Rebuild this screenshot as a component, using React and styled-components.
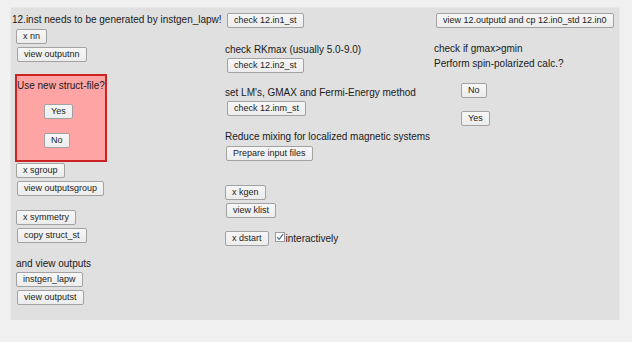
import React, { useState } from "react";
import styled, { createGlobalStyle } from "styled-components";

const Global = createGlobalStyle`
  html, body {
    margin: 0;
    background: #f0f0f0;
  }
  body {
    font-family: "Liberation Sans", Arial, sans-serif;
    color: #1a1a1a;
  }
`;

const App = () => {
  const [interactive, setInteractive] = useState(true);

  return (
    <>
      <Global />
      <Panel>
        <Column>
          <Text $mt={5} $ml={1}>
            12.inst needs to be generated by instgen_lapw!
          </Text>
          <Btn $mt={2} $ml={5}>x nn</Btn>
          <Btn $mt={3} $ml={6}>view outputnn</Btn>
          <Alert>
            <Text $mt={0} $ml={0}>Use new struct-file?</Text>
            <Btn $mt={11} $ml={27}>Yes</Btn>
            <Btn $mt={14} $ml={27}>No</Btn>
          </Alert>
          <Btn $mt={1} $ml={5}>x sgroup</Btn>
          <Btn $mt={3} $ml={6}>view outputsgroup</Btn>
          <Btn $mt={14} $ml={5}>x symmetry</Btn>
          <Btn $mt={3} $ml={6}>copy struct_st</Btn>
          <Text $mt={14} $ml={5}>and view outputs</Text>
          <Btn $mt={1} $ml={5}>instgen_lapw</Btn>
          <Btn $mt={3} $ml={6}>view outputst</Btn>
        </Column>

        <Column>
          <Btn $mt={5} $ml={2}>check 12.in1_st</Btn>
          <Text $mt={15}>check RKmax (usually 5.0-9.0)</Text>
          <Btn $mt={1} $ml={2}>check 12.in2_st</Btn>
          <Text $mt={13}>set LM's, GMAX and Fermi-Energy method</Text>
          <Btn $mt={1} $ml={2}>check 12.inm_st</Btn>
          <Text $mt={14}>Reduce mixing for localized magnetic systems</Text>
          <Btn $mt={2} $ml={1}>Prepare input files</Btn>
          <Btn $mt={24} $ml={0}>x kgen</Btn>
          <Btn $mt={3} $ml={1}>view klist</Btn>
          <Row $mt={13}>
            <Btn $mt={0} $ml={0}>x dstart</Btn>
            <Check onClick={() => setInteractive((v) => !v)}>
              <Box>
                {interactive && (
                  <svg width="8" height="8" viewBox="0 0 8 8">
                    <path
                      d="M1 4.2 L3.2 6.4 L7 1.2"
                      fill="none"
                      stroke="#4a6a9a"
                      strokeWidth="1.2"
                    />
                  </svg>
                )}
              </Box>
              interactively
            </Check>
          </Row>
        </Column>

        <Column>
          <Btn $mt={5} $ml={2}>view 12.outputd and cp 12.in0_std 12.in0</Btn>
          <Text $mt={14}>check if gmax&gt;gmin</Text>
          <Text $mt={1}>Perform spin-polarized calc.?</Text>
          <Btn $mt={12} $ml={27}>No</Btn>
          <Btn $mt={13} $ml={27}>Yes</Btn>
        </Column>
      </Panel>
    </>
  );
};

export default App;

// style
const Panel = styled.div`
  margin: 8px 13px 0 11px;
  height: 312px;
  background: #e0e0e0;
  display: grid;
  grid-template-columns: 214px 209px 1fr;
  box-shadow: 0 0 0 1px #e9e9e9;
`;

const Column = styled.div`
  display: flex;
  flex-direction: column;
  align-items: flex-start;
`;

const Text = styled.div`
  margin-top: ${(p) => p.$mt}px;
  margin-left: ${(p) => p.$ml || 0}px;
  font-size: 10px;
  line-height: 14px;
  white-space: nowrap;
`;

const Btn = styled.button`
  margin-top: ${(p) => p.$mt}px;
  margin-left: ${(p) => p.$ml}px;
  height: 15px;
  padding: 0 6px;
  font-family: "Liberation Sans", Arial, sans-serif;
  font-size: 9px;
  line-height: 13px;
  color: #222;
  background: linear-gradient(#f7f7f7, #ececec);
  border: 1px solid #a2a2a2;
  border-radius: 2px;
  white-space: nowrap;
  cursor: pointer;
`;

const Alert = styled.div`
  margin-top: 12px;
  margin-left: 4px;
  width: 88px;
  height: 81px;
  padding-top: 3px;
  background: #ffa4a4;
  border: 2px solid #cc2222;
  display: flex;
  flex-direction: column;
  align-items: flex-start;
`;

const Row = styled.div`
  margin-top: ${(p) => p.$mt}px;
  display: flex;
  align-items: center;
`;

const Check = styled.label`
  margin-left: 6px;
  display: flex;
  align-items: center;
  gap: 1px;
  font-size: 10px;
  line-height: 14px;
  cursor: pointer;
`;

const Box = styled.span`
  width: 8px;
  height: 8px;
  margin-top: -4px;
  background: #fff;
  border: 1px solid #9a9a9a;
  display: flex;
  align-items: center;
  justify-content: center;
`;
